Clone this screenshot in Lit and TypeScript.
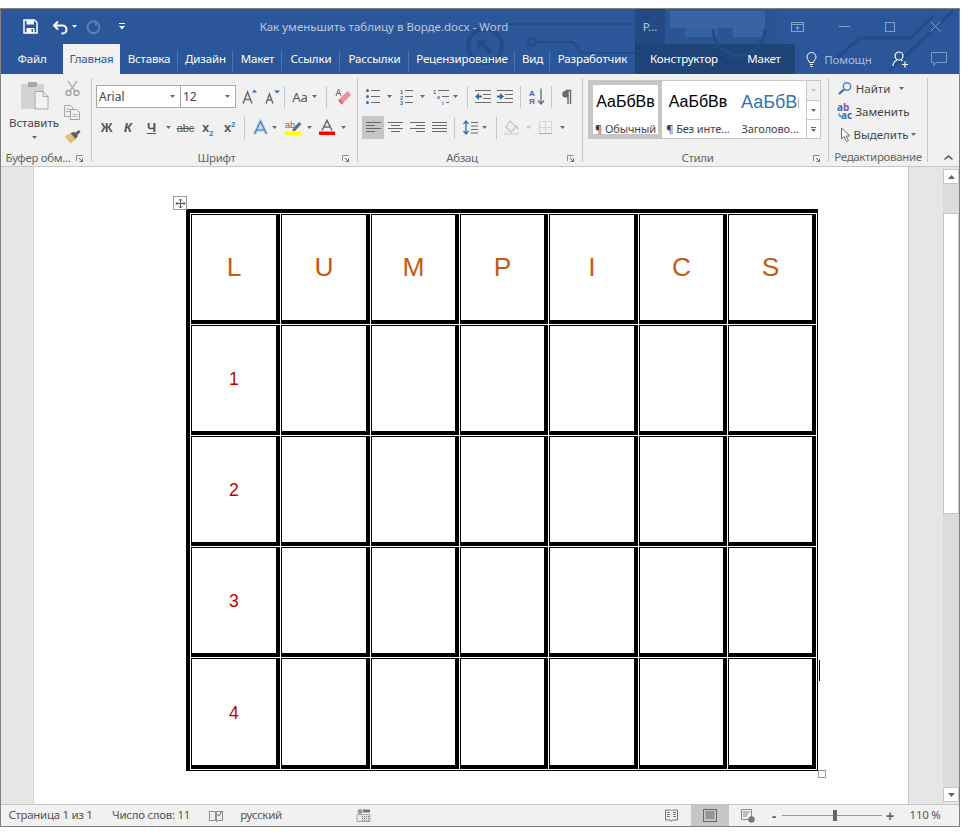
import { LitElement, html, css, svg, TemplateResult } from "lit";
import { customElement } from "lit/decorators.js";

type Item = [number, number, TemplateResult];

const place = (start: number, items: Item[]) => {
  let prev = start;
  return items.map(([x, w, t]) => {
    const m = x - prev;
    prev = x + w;
    return html`<span class="slot" style="margin-left:${m}px;width:${w}px">${t}</span>`;
  });
};

const ic = (w: number, h: number, body: TemplateResult) =>
  html`<svg width=${w} height=${h} viewBox="0 0 ${w} ${h}" fill="none">${body}</svg>`;

const dd = (c = "#6b6b6b") => ic(5, 3, svg`<path d="M0 0h5L2.5 3z" fill=${c}/>`);
const vsep = html`<span class="vsep"></span>`;
const launcher = ic(7, 7, svg`<path d="M.5 6V.5H6.500" stroke="#8a8a8a"/><path d="M3 3l3 3M6.500 3.500V6.500H3.500" stroke="#6b6b6b"/>`);

const G = "#6a6a6a";
const B = "#2f6db5";

const i = {
  save: ic(15, 15, svg`<path d="M1 1h10.500L14 3.500V14H1z" stroke="#fff" stroke-width="1.500"/><rect x="3.500" y="1" width="7.500" height="4.500" fill="#fff"/><rect x="3.500" y="9" width="8" height="5" fill="#fff"/><rect x="8.500" y="10" width="1.500" height="3" fill="#2b579a"/>`),
  undo: ic(17, 14, svg`<path d="M6 1.500L2 5.500l4 4M2 5.500h8.500a4 4 0 0 1 0 8h-1" stroke="#fff" stroke-width="2"/>`),
  redo: ic(14, 14, svg`<path d="M4 1.800a6 6 0 1 0 5 0M9 1v5M9 1.500H4" stroke="#5d80b4" stroke-width="2"/>`),
  custom: ic(6, 7, svg`<path d="M0 .5h6" stroke="#fff"/><path d="M0 3h6L3 6.500z" fill="#fff"/>`),
  ribbonOpt: ic(13, 10, svg`<rect x=".5" y=".5" width="12" height="9" stroke="#86a0c8"/><path d="M.5 2.500h12M6.500 8.500V4.500M4.500 6.500l2-2 2 2" stroke="#86a0c8"/>`),
  min: ic(11, 1, svg`<path d="M0 .5h11" stroke="#86a0c8"/>`),
  max: ic(10, 10, svg`<rect x=".5" y=".5" width="9" height="9" stroke="#86a0c8"/>`),
  close: ic(11, 11, svg`<path d="M.5.5l10 10M10.500.5l-10 10" stroke="#86a0c8"/>`),
  bulb: ic(11, 15, svg`<path d="M3.500 10.500C3 8 1 7.500 1 5a4.500 4.500 0 0 1 9 0c0 2.500-2 3-2.500 5.500z" stroke="#fff"/><path d="M4 12.500h3M4.500 14.500h2" stroke="#fff"/>`),
  person: ic(17, 17, svg`<circle cx="7" cy="5" r="4" stroke="#fff" stroke-width="1.200"/><path d="M1 15c0-3 2-5 4-6M9 9l1.500 1" stroke="#fff" stroke-width="1.200"/><path d="M13 10.500v6M10 13.500h6" stroke="#fff" stroke-width="1.200"/>`),
  comment: ic(16, 14, svg`<path d="M.5.500h15v10H5.500L3 13.500v-3H.500z" stroke="#7f9ac4"/>`),
  paste: ic(29, 31, svg`<rect x="1" y="3" width="23" height="25" rx="1" fill="#d6d2d4"/><rect x="8" y="1" width="9" height="5" fill="#a9a7a8"/><path d="M15 10.500h8l5 5V28H15z" fill="#f3f1f3" stroke="#a8a8a8"/><path d="M23 10.500v5h5" stroke="#a8a8a8"/>`),
  cut: ic(15, 16, svg`<path d="M3 1l7 10M12 1L5 11" stroke="#b5b5b5" stroke-width="1.500"/><circle cx="3.500" cy="13" r="2.500" stroke="#a0a0a0" stroke-width="1.300"/><circle cx="11.500" cy="13" r="2.500" stroke="#a0a0a0" stroke-width="1.300"/>`),
  copy: ic(16, 15, svg`<path d="M.5.500h6l2 2v9H.5z" fill="#f1f1f1" stroke="#a8a8a8"/><path d="M6.500 4.500h6l3 3v7h-9z" fill="#f1f1f1" stroke="#a0a0a0"/><path d="M2 4h4M2 6.500h4M8.500 9.500h5M8.500 11.500h5" stroke="#b5b5b5"/>`),
  brush: ic(17, 15, svg`<path d="M1 7l6-3 5 6-5 4.500C5 13 2 10 1 7z" fill="#e8bd7c"/><path d="M6.500 4l5 6 2.500-3-3.500-4z" fill="#5e5e5e"/><path d="M11 4l4-3 1.500 2-3.500 3.500z" fill="#5e5e5e"/>`),
  growA: ic(15, 15, svg`<path d="M1 14.500L5.500 3l4.500 11.500M2.500 10.500h6" stroke=${G} stroke-width="1.500"/><path d="M10 3.500l2.500-3 2.500 3z" fill=${B}/>`),
  shrinkA: ic(15, 14, svg`<path d="M1 13.500L4.500 4l3.500 9.500M2.500 10h4" stroke=${G} stroke-width="1.400"/><path d="M9 .5h6l-3 3z" fill=${B}/>`),
  eraser: ic(17, 18, svg`<path d="M7 16l9-9-3.500-4-9 9z" fill="#f08ea0"/><path d="M4 12l3.500 4" stroke="#d36b7e" stroke-width="2"/><path d="M1 8L3.500 1 6 8M2 5.500h3" stroke=${G}/>`),
  bullets: ic(14, 15, svg`<circle cx="1.500" cy="1.500" r="1.500" fill=${B}/><circle cx="1.500" cy="7.500" r="1.500" fill=${B}/><circle cx="1.500" cy="13.500" r="1.500" fill=${B}/><path d="M5 1.500h9M5 7.500h9M5 13.500h9" stroke=${G}/>`),
  numbers: ic(13, 15, svg`<text x="0" y="5" font-size="5.500" font-weight="700" fill=${B} font-family="Liberation Sans">1</text><text x="0" y="10.500" font-size="5.500" font-weight="700" fill=${B} font-family="Liberation Sans">2</text><text x="0" y="15.500" font-size="5.500" font-weight="700" fill=${B} font-family="Liberation Sans">3</text><path d="M5 1.500h8M5 7.500h8M5 13.500h8" stroke=${G}/>`),
  multi: ic(16, 15, svg`<text x="0" y="5" font-size="5.500" font-weight="700" fill=${B} font-family="Liberation Sans">1</text><text x="4" y="10" font-size="5" font-weight="700" fill=${B} font-family="Liberation Sans">a</text><text x="9" y="15.500" font-size="5.500" font-weight="700" fill=${B} font-family="Liberation Sans">i</text><path d="M5 1.500h11M9 7.500h7M13 13.500h3" stroke=${G}/>`),
  outdent: ic(16, 14, svg`<path d="M0 .5h16M8 4.500h8M8 8.500h8M0 12.500h16" stroke=${G}/><path d="M0 6.500l4-3.500v2.500h3v2H4V10z" fill=${B}/>`),
  indent: ic(16, 14, svg`<path d="M0 .5h16M8 4.500h8M8 8.500h8M0 12.500h16" stroke=${G}/><path d="M7 6.500L3 3v2.500H0v2h3V10z" fill=${B}/>`),
  sort: ic(16, 17, svg`<text x="0" y="7.500" font-size="8" font-weight="700" fill=${B} font-family="Liberation Sans">A</text><text x="0" y="16" font-size="8" font-weight="700" fill="#8a4fa8" font-family="Liberation Sans">Я</text><path d="M12 .5v15M9 12.500l3 3.500 3-3.500" stroke=${G} stroke-width="1.300"/>`),
  pilcrow: ic(11, 14, svg`<path d="M4.500 .5h6M7 1v13M9.500 1v13" stroke=${G} stroke-width="1.400"/><path d="M7 1H4.500a3.200 3.200 0 0 0 0 6.500H7z" fill=${G}/>`),
  left: ic(15, 11, svg`<path d="M0 .5h15M0 3.500h9M0 6.500h15M0 9.500h9" stroke=${G}/>`),
  center: ic(15, 11, svg`<path d="M0 .5h15M3 3.500h9M0 6.500h15M3 9.500h9" stroke=${G}/>`),
  right: ic(15, 11, svg`<path d="M0 .5h15M6 3.500h9M0 6.500h15M6 9.500h9" stroke=${G}/>`),
  justify: ic(15, 11, svg`<path d="M0 .5h15M0 3.500h15M0 6.500h15M0 9.500h15" stroke=${G}/>`),
  spacing: ic(15, 15, svg`<path d="M3 2v11M.5 4L3 1l2.500 3M.5 11L3 14l2.500-3" stroke=${B} stroke-width="1.300"/><path d="M8 2.500h7M8 6h7M8 9.500h7M8 13h7" stroke=${G}/>`),
  fill: ic(15, 15, svg`<path d="M6 1l6 6-5 5-5-5z" stroke="#c4c4c4" stroke-width="1.300"/><path d="M12 5l2 4" stroke="#c4c4c4" stroke-width="1.500"/><rect x="0" y="12.500" width="15" height="2.500" fill="#dddddd"/>`),
  borders: ic(13, 13, svg`<path d="M.5.500h12v12H.5zM6.500.5v12M.5 6.500h12" stroke="#b8b8b8" stroke-dasharray="1 1"/><path d="M0 12.500h13" stroke="#b0b0b0"/>`),
  textEffect: ic(15, 15, svg`<path d="M1.500 14L7.500 1.500 13.500 14M4 10h7" stroke="#bcd3ee" stroke-width="3.500"/><path d="M1.500 14L7.500 1.500 13.500 14M4 10h7" stroke="#3f7fc4" stroke-width="1.200"/>`),
  highlight: ic(17, 15, svg`<rect x="0" y="11.500" width="16" height="3.500" fill="#ffff00"/><text x="0" y="8" font-size="9" fill=${G} font-family="Liberation Sans">ab</text><path d="M7 10l7-8 2.500 2-7 7.500z" fill=${G}/>`),
  fontColor: ic(16, 15, svg`<rect x="0" y="11.500" width="16" height="3.500" fill="#ff0000"/><path d="M3 10.500L8 .5l5 10M5 7h6" stroke=${G} stroke-width="1.500"/>`),
  find: ic(14, 13, svg`<circle cx="9" cy="4.500" r="3.700" stroke="#4a8ad0" stroke-width="1.500"/><path d="M6 7.500L1 12" stroke="#2f6db5" stroke-width="2.200"/>`),
  replace: ic(17, 15, svg`<text x="1" y="7" font-size="10" font-weight="700" fill=${B} font-family="Noto Sans">a</text><text x="7" y="7" font-size="10" font-weight="700" fill="#8a4fa8" font-family="Noto Sans">b</text><text x="5" y="14.500" font-size="10" font-weight="700" fill=${B} font-family="Noto Sans">ac</text><path d="M3 9v3h2M3.500 11l1.500 1-1.500 1" stroke=${B} stroke-width=".8"/>`),
  cursor: ic(12, 16, svg`<path d="M1.500 1v11l2.500-2.500 2.500 5 2-1-2.500-4.500H10z" stroke="#6a6a6a" fill="#fff"/>`),
  up: ic(9, 5, svg`<path d="M.5 4.500l4-3.500 4 3.500" stroke="#555" stroke-width="1.500"/>`),
  book: ic(14, 14, svg`<path d="M6.500 2.500H.5v9h6zM7.500 2.500v10l2-1h4v-9z" stroke="#8a8a8a"/><path d="M8.500 5l1.500 2 3-5" stroke="#6a6a6a"/>`),
  macro: ic(13, 13, svg`<circle cx="3" cy="2.500" r="2.500" fill="#9a9a9a"/><path d="M0 5.500h13v7H0z" fill="#e8e8e8" stroke="#8a8a8a" stroke-width=".7"/><path d="M6 .5h7v3H6z" fill="#777"/><path d="M5 7.500h7M5 9.500h7M5 11.500h7" stroke="#777" stroke-dasharray="1 1"/>`),
  read: ic(13, 13, svg`<path d="M.5 1h5l1 1 1-1h5v10h-5l-1 1.500-1-1.500h-5z" stroke="#777"/><path d="M2 3.500h3M2 5.500h3M2 7.500h3M8 3.500h3M8 5.500h3M8 7.500h3" stroke="#777"/>`),
  print: ic(14, 13, svg`<rect x=".5" y=".5" width="13" height="12" stroke="#666"/><path d="M2.500 3h9M2.500 5h9M2.500 7h9M2.500 9h9" stroke="#666"/>`),
  web: ic(14, 14, svg`<path d="M.5.500h10v10h-10z" stroke="#888"/><path d="M2 3h7M2 5h5M2 7h4" stroke="#888"/><circle cx="10.500" cy="10.500" r="3.200" fill="#777"/>`),
  move: ic(9, 9, svg`<path d="M4.500 0v9M0 4.500h9M3 1.500L4.500 0 6 1.500M3 7.500L4.500 9 6 7.500M1.500 3L0 4.500 1.500 6M7.500 3L9 4.500 7.500 6" stroke="#555"/>`),
};

const word = "Как уменьшить таблицу в Ворде.docx - Word";

const tabs: [string, number, boolean?][] = [
  ["Файл", 62], ["Главная", 57], ["Вставка", 58, true], ["Дизайн", 55, true], ["Макет", 49, true],
  ["Ссылки", 58, true], ["Рассылки", 69, true], ["Рецензирование", 106, true], ["Вид", 35, true], ["Разработчик", 85],
];

const colW = [89, 89, 88, 88, 89, 88, 88];
const rowH = [110, 110, 110, 110, 111];
const rows: string[][] = [["L", "U", "M", "P", "I", "C", "S"], ["1"], ["2"], ["3"], ["4"]];

@customElement("app-root")
export class AppRoot extends LitElement {
  static styles = css`
    :host { display: block; width: 968px; height: 835px; background: #fff; font-family: "Noto Sans", sans-serif; font-size: 11.5px; color: #444; overflow: hidden; }
    * { box-sizing: border-box; }
    svg { display: block; flex: none; overflow: visible; }
    .win { margin-top: 8px; width: 960px; height: 819px; border: 1px solid #808080; display: flex; flex-direction: column; }
    .slot { display: flex; flex: none; align-items: center; justify-content: center; white-space: nowrap; height: 100%; }
    .vsep { width: 1px; height: 22px; background: #c6c6c6; display: block; }

    .head { height: 65px; background: #2b579a; position: relative; flex: none; }
    .deco { position: absolute; left: 0; top: 0; pointer-events: none; overflow: hidden; }
    .titlebar { height: 35px; display: flex; position: relative; color: #bac8df; font-size: 11.5px; }
    .tabs { height: 30px; display: flex; position: relative; color: #fff; font-size: 11.5px; letter-spacing: -0.15px; }
    .tab { height: 30px; display: flex; align-items: center; justify-content: center; flex: none; position: relative; padding-bottom: 1px; width: 100%; }
    .tab.sep::after { content: ""; position: absolute; right: 0; top: 7px; height: 20px; width: 1px; background: #4e74ad; }
    .tab.active { background: #f1f1f1; color: #2b579a; }
    .help { color: #a8bbd8; }

    .ribbon { height: 93px; flex: none; background: #f1f1f1; border-bottom: 1px solid #c6c6c6; display: flex; padding-top: 4px; }
    .group { height: 84px; flex: none; border-right: 1px solid #c6c6c6; display: flex; flex-direction: column; }
    .g1 { width: 91px; } .g2 { width: 266px; } .g3 { width: 225px; } .g4 { width: 246px; } .g5 { width: 99px; }
    .gbody { height: 72px; flex: none; }
    .glabel { height: 16px; display: flex; align-items: center; color: #666; font-size: 11.5px; letter-spacing: -0.35px; }
    .glabel .t { flex: 1; text-align: center; white-space: nowrap; }
    .glabel .l { width: 16px; flex: none; display: flex; justify-content: flex-start; padding-left: 1px; padding-top: 1px; }
    .clip { display: flex; }
    .pastecol { width: 63px; display: flex; flex-direction: column; align-items: center; padding: 3px 0 0 3px; }
    .pastecol .lbl { margin-top: 3px; height: 16px; line-height: 16px; color: #444; font-size: 11.5px; }
    .pastecol .arrow { margin-top: 5px; }
    .toolcol { display: flex; flex-direction: column; padding-top: 2px; gap: 9px; width: 16px; align-items: center; }
    .r1 { height: 23px; margin-top: 7px; display: flex; }
    .r2 { height: 23px; margin-top: 8px; display: flex; }
    .combo { height: 23px; background: #fff; border: 1px solid #ababab; display: flex; align-items: center; width: 100%; color: #444; font-size: 12px; padding-left: 2px; justify-content: space-between; padding-right: 5px; }
    .aa { font-size: 13px; color: #555; }
    .b { font-family: "Liberation Sans", sans-serif; font-weight: 700; font-size: 13px; color: #555; }
    .bi { font-style: italic; }
    .bu { text-decoration: underline; }
    .bs { text-decoration: line-through; font-size: 11px; font-weight: 400; }
    .bx { font-size: 13px; }
    .bx sub, .bx sup { color: #2f6db5; font-size: 7px; line-height: 0; }
    .active-align { background: #c6c6c6; height: 23px; width: 22px; display: flex; align-items: center; justify-content: center; }

    .gallery { margin: 2px 0 0 5px; width: 233px; height: 59px; border: 1px solid #c6c6c6; background: #fff; display: flex; position: relative; }
    .style { flex: none; width: 72px; height: 57px; display: flex; flex-direction: column; align-items: center; }
    .style.sel { border: 4px solid #c6c6c6; width: 73px; }
    .style .s { font-family: "Liberation Sans", sans-serif; font-size: 16px; color: #000; line-height: 24px; height: 24px; white-space: nowrap; margin-top: 9px; }
    .style.sel .s { margin-top: 5px; }
    .style .n { font-size: 11px; line-height: 15px; margin-top: 5px; color: #444; white-space: nowrap; letter-spacing: -0.1px; }
    .s.blue { color: #2e74b5; width: 58px; overflow: hidden; font-size: 18px; }
    .scroller { width: 14px; margin-left: auto; display: flex; flex-direction: column; flex: none; }
    .scroller span { display: flex; align-items: center; justify-content: center; border-left: 1px solid #c6c6c6; flex: none; }
    .scroller .u { height: 20px; background: #f0f0f0; border-bottom: 1px solid #c6c6c6; }
    .scroller .m { height: 19px; border-bottom: 1px solid #c6c6c6; }
    .scroller .d { height: 18px; flex-direction: column; gap: 1px; }
    .scroller .bar { width: 5px; height: 1px; background: #666; border: 0; }
    .edit { display: flex; flex-direction: column; margin-top: -1px; }
    .eline { height: 23px; display: flex; font-size: 11.5px; color: #444; }
    .tail { flex: 1; display: flex; justify-content: flex-start; padding: 77px 0 0 16px; }

    .doc { flex: 1; display: flex; min-height: 0; background: #e6e6e6; }
    .gutterL { width: 33px; flex: none; border-right: 1px solid #d6d6d6; }
    .page { width: 875px; flex: none; background: #fff; padding: 42px 0 0 152px; border-right: 1px solid #c6c6c6; }
    .gutterR { width: 34px; flex: none; }
    .sb { width: 16px; flex: none; display: flex; flex-direction: column; padding: 2px 0; }
    .sbtn { height: 15px; background: #fff; border: 1px solid #c6c6c6; flex: none; display: flex; align-items: center; justify-content: center; }
    .track { flex: 1; background: #dcdcdc; padding-top: 29px; }
    .thumb { height: 301px; background: #fff; border: 1px solid #c6c6c6; }

    .table { position: relative; width: 632px; height: 562px; border-style: solid; border-color: #000; border-width: 4px 1px 1px 4px; padding: 1px; display: grid; gap: 1px; background: #fff; }
    .cell { border-style: solid; border-color: #000; border-width: 1px 4px 4px 1px; display: flex; align-items: center; justify-content: center; font-family: "Liberation Sans", Arial, sans-serif; background: #fff; }
    .h { font-size: 26.4px; color: #c55a11; }
    .n { font-size: 17.6px; color: #c00000; padding-top: 2px; }
    .movebox { position: absolute; left: -17px; top: -17px; width: 14px; height: 14px; border: 1px solid #9a9a9a; background: #fff; display: flex; align-items: center; justify-content: center; }
    .resize { position: absolute; right: -9px; bottom: -8px; width: 8px; height: 8px; border: 1px solid #9a9a9a; background: #fff; }
    .caret { position: absolute; right: -3px; bottom: 89px; width: 1px; height: 21px; background: #000; }

    .status { height: 22px; flex: none; background: #f1f1f1; border-top: 1px solid #c6c6c6; display: flex; font-size: 11.5px; letter-spacing: -0.3px; color: #555; position: relative; }
    .tx { margin-bottom: 2px; }
    .printbtn { background: #c6c6c6; width: 100%; height: 100%; display: flex; align-items: center; justify-content: center; }
    .slider { width: 100px; height: 1px; background: #9a9a9a; position: relative; display: block; }
    .knob { position: absolute; left: 51px; top: -5px; width: 4px; height: 11px; background: #666; }
    .pm { font-size: 14px; font-weight: 700; color: #666; font-family: "Liberation Sans", sans-serif; }
  `;

  private deco() {
    return html`<svg class="deco" width="958" height="65" viewBox="0 0 958 65" fill="none">
      <g stroke="#234b88" stroke-width="2">
        <path d="M507 15h127M535 33h37l8 11h54" />
        <circle cx="531" cy="33" r="4" />
        <circle cx="484" cy="37" r="17" stroke-width="4" />
        <path d="M490 44l-11-11M478 40v-7h7" stroke-width="4" />
        <path d="M832 52l27-23h50l24-22M888 62l64-60" stroke-width="3" />
      </g>
      <rect x="634" y="0" width="30" height="35" fill="#234a85" />
      <rect x="664" y="2" width="113" height="33" fill="#2a5492" />
      <rect x="669" y="2" width="95" height="17" fill="#3864a3" />
      <rect x="684" y="19" width="32" height="9" fill="#34619f" />
      <rect x="732" y="19" width="32" height="9" fill="#3864a3" />
      <rect x="634" y="35" width="160" height="30" fill="#1f4478" />
      <path d="M712 20a26 26 0 0 0 52 0" stroke="#224a86" stroke-width="3" />
      <path d="M712 40a26 26 0 0 0 30 14" stroke="#1c3f70" stroke-width="2" />
    </svg>`;
  }

  render() {
    const gridStyle = `grid-template-columns:${colW.map((w) => w + "px").join(" ")};grid-template-rows:${rowH.map((h) => h + "px").join(" ")}`;
    return html`<div class="win">
      <div class="head">
        ${this.deco()}
        <div class="titlebar">
          ${place(1, [
            [23, 15, i.save],
            [52, 17, i.undo],
            [72, 5, dd("#fff")],
            [87, 14, i.redo],
            [119, 6, i.custom],
            [261, 246, html`<span>${word}</span>`],
            [642, 16, html`<span>Р...</span>`],
            [791, 13, i.ribbonOpt],
            [839, 11, i.min],
            [885, 10, i.max],
            [930, 11, i.close],
          ])}
        </div>
        <div class="tabs">
          ${place(1, tabs.map(([t, w, sep], idx) => {
            const x = 1 + tabs.slice(0, idx).reduce((a, b) => a + b[1], 0);
            return [x, w, html`<span class="tab ${sep ? "sep" : ""} ${t === "Главная" ? "active" : ""}">${t}</span>`] as Item;
          }))}
          ${place(635, [
            [635, 98, html`<span class="tab">Конструктор</span>`],
            [733, 62, html`<span class="tab">Макет</span>`],
            [806, 11, i.bulb],
            [823, 50, html`<span class="help">Помощн</span>`],
            [892, 17, i.person],
            [931, 16, i.comment],
          ])}
        </div>
      </div>

      <div class="ribbon">
        <div class="group g1">
          <div class="gbody clip">
            <div class="pastecol">
              ${i.paste}
              <span class="lbl">Вставить</span>
              <span class="arrow">${dd()}</span>
            </div>
            <div class="toolcol">${i.cut}${i.copy}${i.brush}</div>
          </div>
          <div class="glabel"><span class="t">Буфер обм...</span><span class="l">${launcher}</span></div>
        </div>

        <div class="group g2">
          <div class="gbody">
            <div class="r1">
              ${place(92, [
                [96, 85, html`<span class="combo">Arial ${dd()}</span>`],
                [180, 56, html`<span class="combo">12 ${dd()}</span>`],
                [242, 15, i.growA],
                [265, 15, i.shrinkA],
                [284, 1, vsep],
                [292, 16, html`<span class="aa">Aa</span>`],
                [312, 5, dd()],
                [326, 1, vsep],
                [335, 17, i.eraser],
              ])}
            </div>
            <div class="r2">
              ${place(92, [
                [100, 13, html`<span class="b">Ж</span>`],
                [123, 10, html`<span class="b bi">К</span>`],
                [146, 11, html`<span class="b bu">Ч</span>`],
                [166, 5, dd()],
                [177, 17, html`<span class="b bs">abc</span>`],
                [201, 13, html`<span class="b bx">x<sub>2</sub></span>`],
                [223, 13, html`<span class="b bx">x<sup>2</sup></span>`],
                [244, 1, vsep],
                [253, 15, i.textEffect],
                [272, 5, dd()],
                [285, 17, i.highlight],
                [307, 5, dd()],
                [319, 16, i.fontColor],
                [341, 5, dd()],
              ])}
            </div>
          </div>
          <div class="glabel"><span class="t">Шрифт</span><span class="l">${launcher}</span></div>
        </div>

        <div class="group g3">
          <div class="gbody">
            <div class="r1">
              ${place(358, [
                [366, 14, i.bullets],
                [387, 5, dd()],
                [400, 13, i.numbers],
                [420, 5, dd()],
                [433, 16, i.multi],
                [453, 5, dd()],
                [467, 1, vsep],
                [475, 16, i.outdent],
                [497, 16, i.indent],
                [520, 1, vsep],
                [529, 16, i.sort],
                [551, 1, vsep],
                [561, 11, i.pilcrow],
              ])}
            </div>
            <div class="r2">
              ${place(358, [
                [362, 22, html`<span class="active-align">${i.left}</span>`],
                [388, 15, i.center],
                [410, 15, i.right],
                [432, 15, i.justify],
                [454, 1, vsep],
                [463, 15, i.spacing],
                [482, 5, dd()],
                [496, 1, vsep],
                [504, 15, i.fill],
                [526, 5, dd("#c4c4c4")],
                [539, 13, i.borders],
                [560, 5, dd()],
              ])}
            </div>
          </div>
          <div class="glabel"><span class="t">Абзац</span><span class="l">${launcher}</span></div>
        </div>

        <div class="group g4">
          <div class="gbody">
            <div class="gallery">
              <div class="style sel"><span class="s">АаБбВв</span><span class="n">¶ Обычный</span></div>
              <div class="style"><span class="s">АаБбВв</span><span class="n">¶ Без инте...</span></div>
              <div class="style"><span class="s blue">АаБбВв</span><span class="n">Заголово...</span></div>
              <div class="scroller">
                <span class="u">${dd("#c4c4c4")}</span>
                <span class="m">${dd()}</span>
                <span class="d"><i class="bar"></i>${dd()}</span>
              </div>
            </div>
          </div>
          <div class="glabel"><span class="t">Стили</span><span class="l">${launcher}</span></div>
        </div>

        <div class="group g5">
          <div class="gbody edit">
            <div class="eline">${place(829, [[838, 14, i.find], [855, 36, html`<span>Найти</span>`], [899, 5, dd()]])}</div>
            <div class="eline">${place(829, [[836, 17, i.replace], [855, 55, html`<span>Заменить</span>`]])}</div>
            <div class="eline">${place(829, [[840, 12, i.cursor], [855, 52, html`<span>Выделить</span>`], [911, 5, dd()]])}</div>
          </div>
          <div class="glabel"><span class="t">Редактирование</span></div>
        </div>
        <div class="tail">${i.up}</div>
      </div>

      <div class="doc">
        <div class="gutterL"></div>
        <div class="page">
          <div class="table" style=${gridStyle}>
            <span class="movebox">${i.move}</span>
            ${rows.map((r, ri) =>
              colW.map((_, ci) => html`<div class="cell ${ri === 0 ? "h" : "n"}">${r[ci] ?? ""}</div>`)
            )}
            <span class="resize"></span>
            <span class="caret"></span>
          </div>
        </div>
        <div class="gutterR"></div>
        <div class="sb">
          <div class="sbtn">${ic(7, 4, svg`<path d="M0 4h7L3.500 0z" fill="#666"/>`)}</div>
          <div class="track"><div class="thumb"></div></div>
          <div class="sbtn">${ic(7, 4, svg`<path d="M0 0h7L3.500 4z" fill="#666"/>`)}</div>
        </div>
      </div>

      <div class="status">
        ${place(1, [
          [8, 85, html`<span class="tx">Страница 1 из 1</span>`],
          [113, 76, html`<span class="tx">Число слов: 11</span>`],
          [209, 14, i.book],
          [240, 42, html`<span class="tx">русский</span>`],
          [357, 13, i.macro],
          [665, 13, i.read],
          [691, 38, html`<span class="printbtn">${i.print}</span>`],
          [741, 14, i.web],
          [770, 8, html`<span class="pm">-</span>`],
          [782, 100, html`<span class="slider"><span class="knob"></span></span>`],
          [885, 10, html`<span class="pm">+</span>`],
          [910, 30, html`<span class="tx">110 %</span>`],
        ])}
      </div>
    </div>`;
  }
}
